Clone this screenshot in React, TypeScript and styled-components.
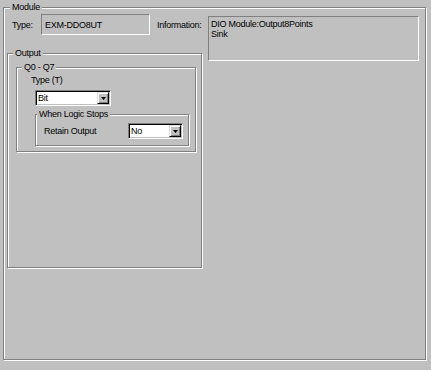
import styled, { createGlobalStyle } from "styled-components"

const GlobalStyle = createGlobalStyle`
  html, body {
    margin: 0;
    padding: 0;
    background: #c0c0c0;
  }
  body {
    font-family: "Liberation Sans", Arial, sans-serif;
    font-size: 9px;
    letter-spacing: -0.25px;
    color: #000;
  }
`

const Page = styled.div`
  width: 431px;
  height: 370px;
  padding-top: 1px;
  padding-left: 3px;
  box-sizing: border-box;
  overflow: hidden;
`

const Group = styled.fieldset<{ $w: number; $h: number }>`
  box-sizing: border-box;
  width: ${(p) => p.$w}px;
  height: ${(p) => p.$h}px;
  min-width: 0;
  margin: 0;
  padding: 0;
  border: 1px solid #808080;
  box-shadow: inset 1px 1px 0 #fff, 1px 1px 0 #fff;
`

const Caption = styled.legend<{ $ml: number }>`
  margin-left: ${(p) => p.$ml}px;
  padding: 0 2px;
  line-height: 13px;
  background: #c0c0c0;
  white-space: nowrap;
`

const ModuleBody = styled.div`
  display: flex;
  align-items: flex-start;
`

const LeftCol = styled.div`
  width: 204px;
  display: flex;
  flex-direction: column;
`

const TypeRow = styled.div`
  display: flex;
  align-items: center;
  padding-left: 8px;
  height: 21px;
`

const Label = styled.span<{ $w?: number }>`
  width: ${(p) => (p.$w ? `${p.$w}px` : "auto")};
  flex: none;
  white-space: nowrap;
`

const StaticBox = styled.div<{ $w: number; $h: number }>`
  box-sizing: border-box;
  width: ${(p) => p.$w}px;
  height: ${(p) => p.$h}px;
  border: 1px solid;
  border-color: #808080 #fff #fff #808080;
  background: #c0c0c0;
  flex: none;
`

const TypeValue = styled(StaticBox)`
  display: flex;
  align-items: center;
  padding-left: 3px;
  margin-right: 7px;
`

const InfoBox = styled(StaticBox)`
  margin-top: 2px;
  padding: 2px 2px;
  line-height: 10px;
`

const OutputGroup = styled(Group)`
  margin: 12px 0 0 3px;
`

const RangeGroup = styled(Group)`
  margin: 1px 0 0 8px;
`

const FieldLabel = styled.div`
  margin-left: 14px;
  line-height: 13px;
`

const StopGroup = styled(Group)`
  margin: 2px 0 0 18px;
`

const StopRow = styled.div`
  display: flex;
  align-items: center;
  padding-left: 8px;
  margin-top: 2px;
`

const Combo = styled.div<{ $w: number }>`
  box-sizing: border-box;
  width: ${(p) => p.$w}px;
  height: 16px;
  flex: none;
  display: flex;
  align-items: center;
  background: #fff;
  border: 1px solid;
  border-color: #808080 #fff #fff #808080;
  box-shadow: inset 1px 1px 0 #000, inset -1px -1px 0 #c0c0c0;
`

const ComboText = styled.span`
  flex: 1;
  padding-left: 2px;
`

const ComboButton = styled.span`
  box-sizing: border-box;
  width: 12px;
  height: 12px;
  margin-right: 1px;
  display: flex;
  align-items: center;
  justify-content: center;
  background: #c0c0c0;
  border: 1px solid;
  border-color: #dfdfdf #000 #000 #dfdfdf;
  box-shadow: inset 1px 1px 0 #fff, inset -1px -1px 0 #808080;
`

const BitCombo = styled(Combo)`
  margin: 3px 0 0 18px;
`

const DropDown = ({ value }: { value: string }) => (
  <>
    <ComboText>{value}</ComboText>
    <ComboButton>
      <svg width="5" height="3" viewBox="0 0 5 3">
        <polygon points="0,0 5,0 2.5,3" fill="#000" />
      </svg>
    </ComboButton>
  </>
)

const App = () => {
  return (
    <>
      <GlobalStyle />
      <Page>
        <Group $w={423} $h={359}>
          <Caption $ml={6}>Module</Caption>
          <ModuleBody>
            <LeftCol>
              <TypeRow>
                <Label $w={29}>Type:</Label>
                <TypeValue $w={109} $h={21}>EXM-DDO8UT</TypeValue>
                <Label>Information:</Label>
              </TypeRow>
              <OutputGroup $w={195} $h={221}>
                <Caption $ml={5}>Output</Caption>
                <RangeGroup $w={180} $h={91}>
                  <Caption $ml={5}>Q0 - Q7</Caption>
                  <FieldLabel>Type (T)</FieldLabel>
                  <BitCombo $w={76}>
                    <DropDown value="Bit" />
                  </BitCombo>
                  <StopGroup $w={154} $h={38}>
                    <Caption $ml={1}>When Logic Stops</Caption>
                    <StopRow>
                      <Label $w={84}>Retain Output</Label>
                      <Combo $w={55}>
                        <DropDown value="No" />
                      </Combo>
                    </StopRow>
                  </StopGroup>
                </RangeGroup>
              </OutputGroup>
            </LeftCol>
            <InfoBox $w={211} $h={45}>
              DIO Module:Output8Points
              <br />
              Sink
            </InfoBox>
          </ModuleBody>
        </Group>
      </Page>
    </>
  )
}

export default App
